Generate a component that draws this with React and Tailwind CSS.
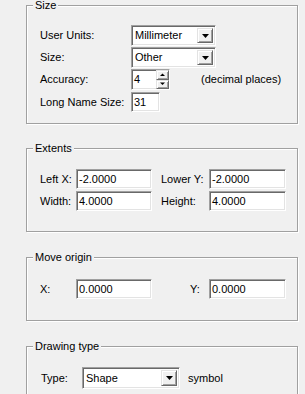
import React from "react";

const sunken =
  "bg-white border border-t-[#a0a0a0] border-l-[#a0a0a0] border-r-white border-b-white shadow-[inset_1px_1px_0_#696969,inset_-1px_-1px_0_#e3e3e3]";
const raised =
  "bg-[#f0f0f0] border border-t-[#e3e3e3] border-l-[#e3e3e3] border-r-[#696969] border-b-[#696969] shadow-[inset_1px_1px_0_#fff,inset_-1px_-1px_0_#a0a0a0]";

function Group({ title, className = "", children }) {
  return (
    <div
      className={`relative border border-[#a0a0a0] shadow-[inset_1px_1px_0_#fff,1px_1px_0_#fff] ${className}`}
    >
      <span className="absolute -top-[8px] left-[6px] bg-[#f0f0f0] px-[2px] leading-[14px]">
        {title}
      </span>
      {children}
    </div>
  );
}

function Field({ value, w, h = 20 }) {
  return (
    <div
      className={`${sunken} flex items-center pl-[2px]`}
      style={{ width: w, height: h }}
    >
      {value}
    </div>
  );
}

function Arrow({ up = false, small = false }) {
  const pts = small
    ? up ? "0,3 2.5,0.5 5,3" : "0,0.5 2.5,3 5,0.5"
    : "0,0 7,0 3.5,4";
  return (
    <svg width={small ? 5 : 7} height={small ? 4 : 4} viewBox={small ? "0 0 5 4" : "0 0 7 4"}>
      <polygon points={pts} fill="#000" />
    </svg>
  );
}

function Combo({ value, w, h = 21 }) {
  return (
    <div
      className={`${sunken} flex items-center p-[2px]`}
      style={{ width: w, height: h }}
    >
      <span className="flex-1 pl-[1px]">{value}</span>
      <div className={`${raised} flex h-full w-[16px] items-center justify-center`}>
        <Arrow />
      </div>
    </div>
  );
}

function Spin({ value }) {
  return (
    <div className={`${sunken} flex h-[21px] w-[39px] items-stretch`}>
      <span className="flex flex-1 items-center pl-[2px]">{value}</span>
      <div className="flex w-[13px] flex-col">
        <div className={`${raised} flex flex-1 items-center justify-center`}>
          <Arrow up small />
        </div>
        <div className={`${raised} flex flex-1 items-center justify-center`}>
          <Arrow small />
        </div>
      </div>
    </div>
  );
}

export default function App() {
  return (
    <div className="h-[394px] w-[305px] overflow-hidden bg-[#f0f0f0] pl-[26px] pr-[7px] pt-[5px] font-['Liberation_Sans',Arial,sans-serif] text-[11px] leading-none text-black">
      {/* Size */}
      <Group title="Size" className="h-[119px] pl-[13px] pt-[19px]">
        <div className="flex h-[21px] items-center">
          <span className="w-[91px]">User Units:</span>
          <Combo value="Millimeter" w={85} />
        </div>
        <div className="mt-[1px] flex h-[21px] items-center">
          <span className="w-[91px]">Size:</span>
          <Combo value="Other" w={85} />
        </div>
        <div className="mt-[1px] flex h-[21px] items-center">
          <span className="w-[91px]">Accuracy:</span>
          <Spin value="4" />
          <span className="ml-[31px]">(decimal places)</span>
        </div>
        <div className="mt-[2px] flex h-[20px] items-center">
          <span className="w-[91px]">Long Name Size:</span>
          <Field value="31" w={29} />
        </div>
      </Group>

      {/* Extents */}
      <Group title="Extents" className="mt-[24px] h-[84px] pl-[13px] pt-[20px]">
        <div className="flex h-[20px] items-center">
          <span className="w-[36px]">Left X:</span>
          <Field value="-2.0000" w={76} />
          <span className="ml-[9px] w-[48px]">Lower Y:</span>
          <Field value="-2.0000" w={77} />
        </div>
        <div className="mt-[2px] flex h-[20px] items-center">
          <span className="w-[36px]">Width:</span>
          <Field value="4.0000" w={76} />
          <span className="ml-[9px] w-[48px]">Height:</span>
          <Field value="4.0000" w={77} />
        </div>
      </Group>

      {/* Move origin */}
      <Group title="Move origin" className="mt-[25px] h-[64px] pl-[13px] pt-[21px]">
        <div className="flex h-[20px] items-center">
          <span className="w-[36px]">X:</span>
          <Field value="0.0000" w={76} />
          <span className="ml-[38px] w-[19px]">Y:</span>
          <Field value="0.0000" w={77} />
        </div>
      </Group>

      {/* Drawing type */}
      <Group title="Drawing type" className="mt-[25px] h-[80px] pl-[14px] pt-[20px]">
        <div className="flex h-[22px] items-center">
          <span className="w-[41px]">Type:</span>
          <Combo value="Shape" w={98} h={22} />
          <span className="ml-[8px]">symbol</span>
        </div>
      </Group>
    </div>
  );
}
